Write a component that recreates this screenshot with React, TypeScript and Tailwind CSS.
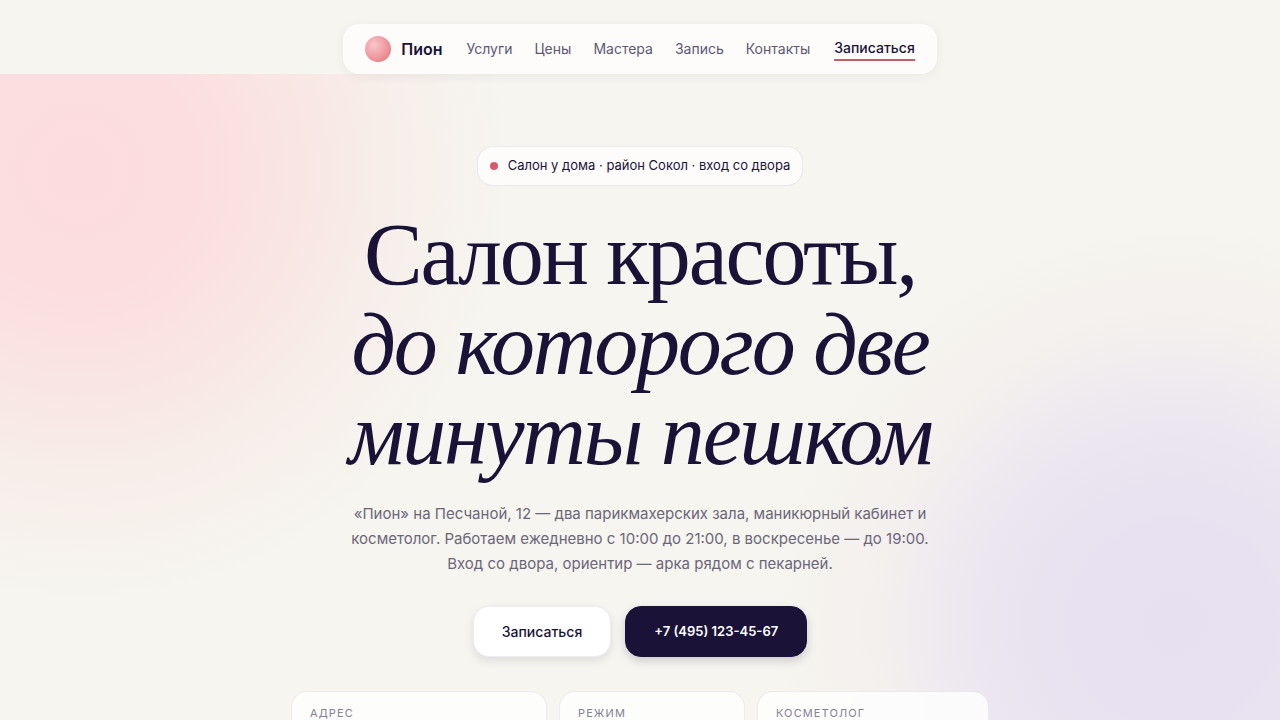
const navLinks = [
  { label: 'Услуги', href: '#services' },
  { label: 'Цены', href: '#prices' },
  { label: 'Мастера', href: '#team' },
  { label: 'Запись', href: '#booking' },
  { label: 'Контакты', href: '#contacts' },
];

const facts = ['Адрес', 'Режим', 'Косметолог'];

function Header() {
  return (
    <header className="flex justify-center pt-6">
      <nav className="relative z-10 flex h-[50px] items-center gap-6 rounded-2xl bg-[#fdfcfb] px-[22px] shadow-[0_2px_12px_rgba(27,18,56,0.06)]">
        <a href="#top" className="flex items-center gap-[10px] text-base font-semibold">
          <span className="size-[26px] rounded-full bg-[radial-gradient(circle_at_35%_35%,#f9c6cb,#ee9299_60%,#dc6672)]" />
          Пион
        </a>
        <div className="flex items-center gap-[22px] text-sm text-[#5e5872]">
          {navLinks.map((link) => (
            <a key={link.href} href={link.href}>
              {link.label}
            </a>
          ))}
        </div>
        <a href="#booking" className="border-b-2 border-[#c75f6b] text-sm leading-[22px] font-medium">
          Записаться
        </a>
      </nav>
    </header>
  );
}

function Facts() {
  return (
    <ul className="mx-auto mt-[34px] grid w-full max-w-[698px] grid-cols-[256fr_186fr_232fr] gap-3 text-left">
      {facts.map((label) => (
        <li
          key={label}
          className="min-h-20 rounded-2xl border border-[#1b1238]/8 bg-white/80 px-[18px] py-[13px] text-[11px] leading-4 tracking-widest text-[#857f94] uppercase"
        >
          {label}
        </li>
      ))}
    </ul>
  );
}

function Hero() {
  return (
    <section
      id="top"
      className="bg-[radial-gradient(circle_at_80px_96px,#fddcdf_0,#fcdee0_120px,#f9e5e2_210px,#f7eeea_310px,#f6f5ef_430px,transparent_460px),radial-gradient(circle_at_calc(100%-105px)_550px,#e6e0f1_0,#e7e1f1_100px,#ece6f0_200px,#f4f0ee_300px,#f6f5ef_400px)] px-6 pt-[72px] pb-10 text-center"
    >
      <p className="inline-flex h-10 items-center gap-[10px] rounded-2xl border border-[#1b1238]/8 bg-[#fdfcfb] px-3 text-[13px]">
        <span className="size-2 rounded-full bg-[#d65a6a]" />
        Салон у дома · район Сокол · вход со двора
      </p>
      <h1 className="mx-auto mt-6 max-w-[720px] font-['Liberation_Serif',serif] text-[88px] leading-[90px] tracking-tight">
        Салон красоты,
        <em className="block">до которого две минуты пешком</em>
      </h1>
      <p className="mx-auto mt-[21px] max-w-[600px] text-[15px] leading-[25px] text-[#6c667b]">
        «Пион» на Песчаной, 12 — два парикмахерских зала, маникюрный кабинет и косметолог. Работаем ежедневно с 10:00 до
        21:00, в воскресенье — до 19:00. Вход со двора, ориентир — арка рядом с пекарней.
      </p>
      <div className="mt-[30px] flex justify-center gap-[14px]">
        <button
          type="button"
          className="rounded-2xl border border-[#1b1238]/8 bg-white px-7 py-[14px] text-sm leading-[21px] font-medium shadow-[0_4px_10px_rgba(27,18,56,0.1)]"
        >
          Записаться
        </button>
        <a
          href="tel:+74951234567"
          className="rounded-2xl border border-[#1b1238] bg-[#1b1238] px-7 py-[14px] text-[13px] leading-[21px] font-semibold text-white shadow-[0_4px_10px_rgba(27,18,56,0.18)]"
        >
          +7 (495) 123-45-67
        </a>
      </div>
      <Facts />
    </section>
  );
}

export default function App() {
  return (
    <div className="min-h-screen overflow-x-hidden bg-[#f6f5ef] font-[Inter,sans-serif] text-[#1b1238]">
      <Header />
      <Hero />
    </div>
  );
}
